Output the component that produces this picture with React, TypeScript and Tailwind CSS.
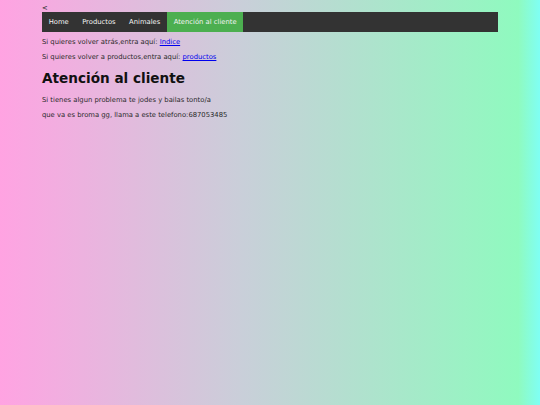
import React from 'react';

const NAV_ITEMS = [
  { label: 'Home', active: false },
  { label: 'Productos', active: false },
  { label: 'Animales', active: false },
  { label: 'Atención al cliente', active: true },
];

export default function App() {
  return (
    <div
      className="min-h-[405px] w-full px-[42px] pt-[3.6px] pb-[3.4px] text-[6.8px] leading-[1.19] text-[#2a2a2a] bg-[linear-gradient(to_right,#ffa3e2_0%,#c9cfd9_45%,#8ffabf_96%,#7ffff4_100%)]"
      style={{ fontFamily: '"DejaVu Sans", sans-serif' }}
    >
      <div className="text-[#333]">&lt;</div>
      <ul className="flex bg-[#333333] list-none m-0 p-0">
        {NAV_ITEMS.map(item => (
          <li key={item.label}>
            <a
              href="#"
              className={`block px-[6.7px] py-[5.9px] text-[#f2f2f2] no-underline ${item.active ? 'bg-[#4caf50]' : ''}`}
            >
              {item.label}
            </a>
          </li>
        ))}
      </ul>
      <p className="my-[6.9px]">
        Si quieres volver atrás,entra aquí: <a href="#" className="text-[#0000ee] underline">Indice</a>
      </p>
      <p className="my-[6.9px]">
        Si quieres volver a productos,entra aquí: <a href="#" className="text-[#0000ee] underline">productos</a>
      </p>
      <h1 className="text-[13.6px] leading-[1.17] font-bold my-[9.2px] text-[#111]">Atención al cliente</h1>
      <p className="my-[6.9px]">Si tienes algun problema te jodes y bailas tonto/a</p>
      <p className="my-[6.9px]">que va es broma gg, llama a este telefono:687053485</p>
    </div>
  );
}
